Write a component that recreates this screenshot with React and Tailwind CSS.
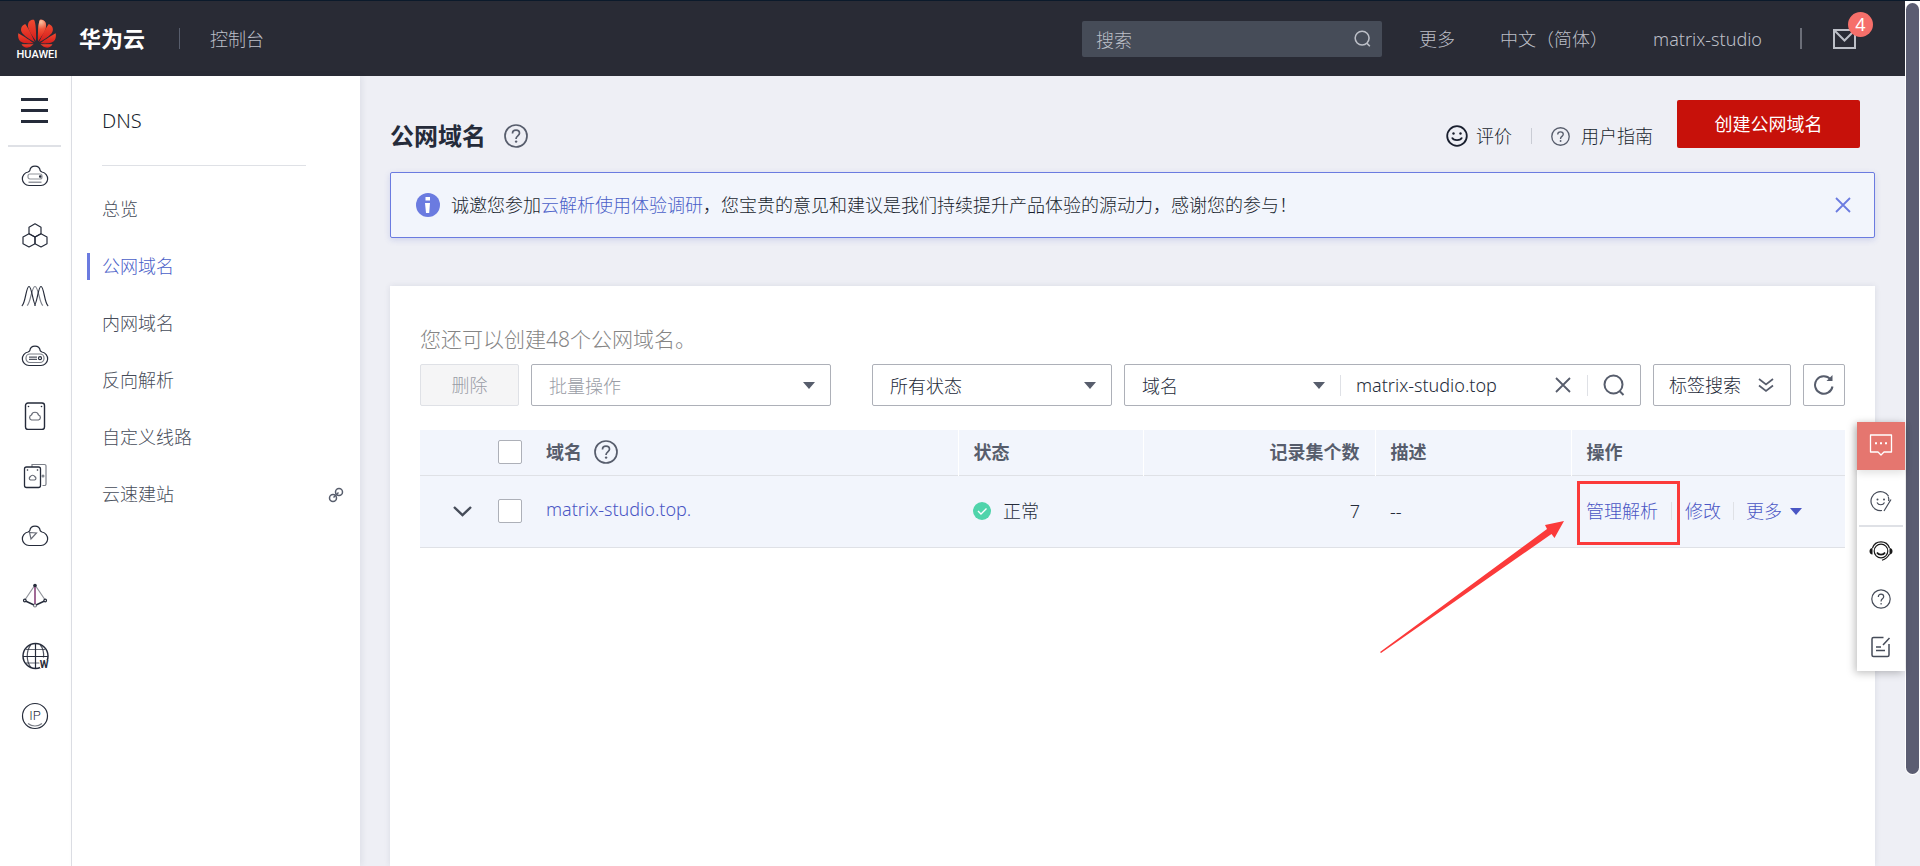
import { useState } from 'react';

const MENU = ['总览', '公网域名', '内网域名', '反向解析', '自定义线路', '云速建站'];

const CLOUD = 'M8 23.5 A6.8 6.8 0 0 1 7 10 C8 9.8 8.3 9.4 8.8 8.6 A5.25 5.25 0 0 1 19.2 8.6 C19.7 9.4 20 9.8 21 10 A6.8 6.8 0 0 1 20 23.5 Z';
const SMALL_CLOUD = 'M10.5 18 a2.6 2.6 0 0 1 0-5 a3.6 3.6 0 0 1 7 0 a2.6 2.6 0 0 1 0 5 Z';

const RAIL = [
  { label: '弹性云服务器', art: (
    <>
      <path d={CLOUD} />
      <rect x="7" y="12" width="14" height="5" rx="2" strokeOpacity=".5" />
      <path d="M7.5 20.2h13" strokeOpacity=".6" />
      <circle cx="19.2" cy="14.5" r=".7" fill="currentColor" />
    </>
  ) },
  { label: '云容器', art: (
    <>
      <path d="M14 1.8l6 3.4v6.6l-6 3.2-6-3.2V5.2z" strokeLinejoin="round" />
      <path d="M8 11.8l6 3.2v6.8l-6 3.2-6-3.2V15z" strokeLinejoin="round" />
      <path d="M20 11.8l6 3.2v6.8l-6 3.2-6-3.2V15z" strokeLinejoin="round" />
    </>
  ) },
  { label: '弹性伸缩', art: (
    <>
      <path d="M.8 24C4.500 22 5 4.500 8 4.500S12 23.500 15 23.500" />
      <path d="M27.200 24C23.500 22 23 4.500 20 4.500S16 23.500 13 23.500" />
      <path d="M6 23.500C9.500 22 10.500 4.500 14 4.500S18.500 22 22 23.500" strokeOpacity=".6" />
    </>
  ) },
  { label: '云硬盘', art: (
    <>
      <path d={CLOUD} />
      <rect x="5" y="12" width="18" height="8.500" rx="4" strokeOpacity=".6" />
      <path d="M8 15.200h8M8 17.300h8" strokeOpacity=".8" />
      <circle cx="19" cy="16.200" r="1.500" />
    </>
  ) },
  { label: '专属存储', art: (
    <>
      <rect x="4.500" y="1" width="19" height="26.500" rx="2.500" strokeWidth="1.400" />
      <path d={SMALL_CLOUD} strokeOpacity=".7" />
      <circle cx="7.500" cy="4.500" r=".8" fill="currentColor" stroke="none" />
      <circle cx="20.500" cy="4.500" r=".8" fill="currentColor" stroke="none" />
    </>
  ) },
  { label: '云备份', art: (
    <>
      <rect x="3.500" y="5" width="16" height="20.500" rx="2" strokeWidth="1.300" />
      <path d="M11 5V2.500h12.500a1.500 1.500 0 0 1 1.500 1.500v18a1.500 1.500 0 0 1-1.500 1.500h-2" strokeOpacity=".6" />
      <path d="M9.500 18a1.800 1.800 0 0 1 0-3.400 a2.300 2.300 0 0 1 4.200 0 a1.800 1.800 0 0 1 0 3.400Z" strokeOpacity=".7" />
      <circle cx="6.500" cy="8" r=".8" fill="currentColor" stroke="none" />
      <circle cx="16.500" cy="8" r=".8" fill="currentColor" stroke="none" />
      <circle cx="22" cy="14" r=".9" strokeOpacity=".6" />
    </>
  ) },
  { label: '虚拟私有云', art: (
    <>
      <path d={CLOUD} />
      <path d="M8.500 10.500l7 .5-5.500 6z" strokeOpacity=".7" />
    </>
  ) },
  { label: '弹性负载均衡', art: (
    <>
      <path d="M14 3L3.500 18.500M14 3l10.500 15.500" strokeOpacity=".5" />
      <path d="M14 3v19" stroke="#7a2a6a" strokeWidth="1.400" />
      <path d="M4.500 19l8.500 4M23.500 19l-8.500 4" strokeWidth="1.400" />
      <circle cx="14" cy="3.500" r="1.800" fill="currentColor" stroke="none" />
      <circle cx="3.800" cy="18.500" r="1.300" fill="white" />
      <circle cx="24.200" cy="18.500" r="1.300" fill="white" />
      <circle cx="14" cy="23.500" r="1.500" fill="white" strokeOpacity=".6" />
    </>
  ) },
  { label: '域名注册', art: (
    <>
      <circle cx="14.500" cy="14" r="12.500" strokeWidth="1.500" />
      <path d="M2 14.500h25M14.500 1.500v25" />
      <path d="M5 7.500h19M5 21h14" strokeOpacity=".7" />
      <path d="M10 2.500c-5 6-5 17 0 23M19 2.500c3 3.500 4 8 3.500 13" strokeOpacity=".8" />
      <path d="M18 18h10v8H19z" fill="white" stroke="none" />
      <text x="23" y="26" textAnchor="middle" fill="currentColor" stroke="none" className="font-[Roboto] text-[10px] font-bold">W</text>
    </>
  ) },
  { label: '弹性公网IP', art: (
    <>
      <circle cx="14" cy="14" r="12.500" strokeWidth="1.200" />
      <path d="M7 21.500c4 3.300 10 3.300 14 0" strokeOpacity=".6" />
      <text x="14" y="18" textAnchor="middle" fill="currentColor" stroke="none" className="font-[Roboto] text-[13px] font-light">IP</text>
    </>
  ) },
];

function HuaweiLogo() {
  const half = (
    <>
      <path d="M18 22C18.200 15 18 4 16 .8C12.500.2 9.500 3 10 7.500C10.500 12 15 18 18 22Z" />
      <path d="M16.800 23C14 17 10.500 9 7.200 5C3.500 6.500 1.500 10.500 4.500 14.500C8 18.500 13 21 16.800 23Z" />
      <path d="M15.800 24.300C10 20 3.500 16 .3 14.300C-.4 19 .8 22 4.500 23.500C8 24.800 12.500 24.300 15.800 24.300Z" />
      <path d="M15.500 25.300C11 25.300 6.500 25 3.500 25.200C5 28 8 29.300 11 28.300C13 27.600 14.500 26.300 15.500 25.300Z" />
    </>
  );
  return (
    <svg width="38" height="30" viewBox="0 0 38 30" aria-hidden="true">
      <defs>
        <radialGradient id="petal" gradientUnits="userSpaceOnUse" cx="23" cy="3" r="24">
          <stop offset="0" stopColor="#fbc3a0" />
          <stop offset=".3" stopColor="#f0543a" />
          <stop offset=".65" stopColor="#e5281b" />
          <stop offset="1" stopColor="#c8171a" />
        </radialGradient>
        <linearGradient id="petalDark" x1="0" y1="0" x2="0" y2="1">
          <stop offset="0" stopColor="#f04a30" />
          <stop offset="1" stopColor="#d51c1c" />
        </linearGradient>
      </defs>
      <g fill="url(#petalDark)">{half}</g>
      <g fill="url(#petalDark)" transform="translate(38 0) scale(-1 1)">{half}</g>
      <path d="M20 22C19.800 15 20 4 22 .8C25.500.2 28.500 3 28 7.500C27.500 12 23 18 20 22Z" fill="url(#petal)" />
    </svg>
  );
}

function HelpIcon({ className }) {
  return (
    <svg viewBox="0 0 24 24" className={className} fill="none" stroke="currentColor" strokeWidth="1.700" aria-hidden="true">
      <circle cx="12" cy="12" r="11" />
      <path d="M8.500 9.500C8.500 7.500 10 6.200 12 6.200s3.500 1.300 3.500 3.100c0 2.400-3.400 2.700-3.400 5.200v.5" />
      <circle cx="12.100" cy="17.600" r="1.200" fill="currentColor" stroke="none" />
    </svg>
  );
}

function SearchIcon({ className }) {
  return (
    <svg viewBox="0 0 22 22" className={className} fill="none" stroke="currentColor" strokeWidth="2" aria-hidden="true">
      <circle cx="10.500" cy="10.500" r="9" />
      <path d="M16.500 17l4 4" />
    </svg>
  );
}

function CloseIcon({ className }) {
  return (
    <svg viewBox="0 0 16 16" className={className} fill="none" stroke="currentColor" strokeWidth="1.800" aria-hidden="true">
      <path d="M1 1l14 14M15 1L1 15" />
    </svg>
  );
}

function Caret({ className }) {
  return (
    <svg width="12" height="7" viewBox="0 0 12 7" className={className} aria-hidden="true">
      <path d="M0 0h12L6 7z" fill="currentColor" />
    </svg>
  );
}

function SelectBox({ label, value, boxCls, textCls = 'text-[#252b3a]' }) {
  return (
    <label className={`relative flex h-[42px] items-center ${boxCls}`}>
      <span className="sr-only">{label}</span>
      <select className={`h-full w-full appearance-none bg-transparent pl-[17px] pr-10 font-['Noto_Sans_CJK_SC',sans-serif] leading-8 ${textCls}`}>
        <option>{value}</option>
      </select>
      <Caret className="pointer-events-none absolute right-[15px] text-[#575d6c]" />
    </label>
  );
}

function TopBar() {
  return (
    <header className="flex h-[76px] items-center border-t border-[#0b1a2b] bg-[#292b35] text-[#bcbfc7]">
      <a href="#" className="mt-[2px] ml-[18px] flex w-[38px] flex-col items-center" aria-label="HUAWEI">
        <HuaweiLogo />
        <span className="font-[Roboto] text-[11px] leading-3 font-medium text-white">HUAWEI</span>
      </a>
      <a href="#" className="ml-[23px] text-[22px] font-bold text-white">华为云</a>
      <span className="ml-[34px] h-[21px] w-px bg-[#575d6c]" />
      <a href="#" className="ml-[30px]">控制台</a>

      <label className="mr-px ml-auto flex h-9 w-[300px] items-center rounded-xs bg-[#464c58] pr-[11px] pl-[14px]">
        <span className="sr-only">搜索</span>
        <input type="text" placeholder="搜索" className="h-full min-w-0 flex-1 bg-transparent font-['Noto_Sans_CJK_SC',sans-serif] leading-8 outline-none placeholder:text-[#bcbfc7]" />
        <SearchIcon className="h-[17px] w-[17px]" />
      </label>
      <a href="#" className="ml-9">更多</a>
      <a href="#" className="ml-[45px]">中文（简体）</a>
      <a href="#" className="ml-[45px]">matrix-studio</a>
      <span className="ml-[38px] h-[21px] w-[2px] bg-[#6b6e78]" />
      <button className="relative mr-[49px] ml-[31px]" aria-label="消息">
        <svg width="23" height="20" viewBox="0 0 23 20" fill="none" stroke="currentColor" strokeWidth="2">
          <path d="M1 1h21v18H1zM1.500 1.500l10 10 10-10" />
        </svg>
        <span className="absolute -top-[17px] left-[15px] flex h-[25px] w-[25px] items-center justify-center rounded-full bg-[#f66f6a] font-normal text-white">4</span>
      </button>
    </header>
  );
}

function Rail() {
  return (
    <nav className="flex w-18 shrink-0 flex-col items-center border-r border-[#dfe1e6] bg-white pr-[2px]">
      <button className="mt-[22px] flex h-[25px] w-[27px] flex-col justify-between text-[#252b3a]" aria-label="菜单">
        <span className="h-[3px] w-full bg-current" />
        <span className="h-[3px] w-full bg-current" />
        <span className="h-[3px] w-full bg-current" />
      </button>
      <span className="mt-[22px] h-[2px] w-[53px] bg-[#dfe1e6]" />
      <ul className="mt-[15px] flex flex-col gap-8">
        {RAIL.map(item => (
          <li key={item.label}>
            <a href="#" aria-label={item.label} className="block text-[#252b3a]">
              <svg width="28" height="28" viewBox="0 0 28 28" fill="none" stroke="currentColor" strokeWidth="1.200">
                {item.art}
              </svg>
            </a>
          </li>
        ))}
      </ul>
    </nav>
  );
}

function SideMenu() {
  return (
    <nav className="w-72 shrink-0 bg-white pt-[30px] shadow-[2px_0_6px_rgba(40,50,80,0.08)]">
      <h2 className="ml-[30px] text-xl leading-[30px] text-[#191f2e]">DNS</h2>
      <div className="mt-[29px] mr-[54px] ml-[30px] h-px bg-[#dfe1e6]" />
      <ul className="mt-[30px] flex flex-col gap-[30px]">
        {MENU.map(name => {
          const active = name === '公网域名';
          return (
            <li key={name} className={`ml-[15px] border-l-3 pl-3 leading-[27px] ${active ? 'border-[#6b7be0] text-[#4a60c8]' : 'border-transparent text-[#464c59]'}`}>
              <a href="#" className="flex items-center justify-between pr-4">
                {name}
                {name === '云速建站' && (
                  <svg width="16" height="16" viewBox="0 0 16 16" fill="none" stroke="#575d6c" strokeWidth="1.500" aria-hidden="true">
                    <circle cx="11" cy="5" r="3.500" />
                    <circle cx="5" cy="11" r="3.500" />
                    <path d="M5.500 10.500l5-5" />
                  </svg>
                )}
              </a>
            </li>
          );
        })}
      </ul>
    </nav>
  );
}

function PageHeader() {
  return (
    <div className="flex h-[72px] items-center pr-[15px]">
      <h1 className="text-2xl font-bold text-[#252b3a]">公网域名</h1>
      <button className="ml-[18px] text-[#575d6c]" aria-label="帮助"><HelpIcon className="h-6 w-6" /></button>
      <div className="ml-auto flex items-center text-[#191f2e]">
        <a href="#" className="flex items-center gap-2">
          <svg width="22" height="22" viewBox="0 0 22 22" fill="none" stroke="currentColor" strokeWidth="1.800" aria-hidden="true">
            <circle cx="11" cy="11" r="9.800" />
            <path d="M6 12.500c1.500 3.500 8.500 3.500 10 0" />
            <circle cx="7.500" cy="8.500" r="1.200" fill="currentColor" stroke="none" />
            <circle cx="14.500" cy="8.500" r="1.200" fill="currentColor" stroke="none" />
          </svg>
          评价
        </a>
        <span className="mx-[19px] h-4 w-px bg-[#c9ccd4]" />
        <a href="#" className="flex items-center gap-[11px]">
          <HelpIcon className="h-[19px] w-[19px] text-[#575d6c]" />
          用户指南
        </a>
      </div>
      <button className="mb-6 ml-6 h-12 w-[183px] rounded-xs bg-[#c7110a] font-normal text-white">创建公网域名</button>
    </div>
  );
}

function Notice({ onClose }) {
  return (
    <div className="flex h-[66px] items-center rounded-xs border border-[#6b7be0] bg-[#f2f5fc] px-[25px] shadow-[0_2px_6px_rgba(80,100,200,0.2)]">
      <svg width="24" height="24" viewBox="0 0 24 24" aria-hidden="true">
        <circle cx="12" cy="12" r="12" fill="#6b7be0" />
        <path d="M9.500 4h4.500v3.500H9.500zM9 10h5l-.8 10h-3.200z" fill="white" />
      </svg>
      <p className="ml-[11px] text-[#191f2e]">
        诚邀您参加<a href="#" className="text-[#4a60c8]">云解析使用体验调研</a>，您宝贵的意见和建议是我们持续提升产品体验的源动力，感谢您的参与！
      </p>
      <button onClick={onClose} className="mr-[-2px] ml-auto text-[#6b7be0]" aria-label="关闭"><CloseIcon className="h-4 w-4" /></button>
    </div>
  );
}

function FilterBar() {
  const [keyword, setKeyword] = useState('matrix-studio.top');

  return (
    <div className="flex gap-3 text-[#252b3a]">
      <button disabled className="w-[99px] rounded-xs border border-[#dfe1e6] bg-[#f5f5f6] text-[#9a9da6]">删除</button>
      <SelectBox label="批量操作" value="批量操作" boxCls="w-[300px] rounded-xs border border-[#adb0b8]" textCls="text-[#9a9da6]" />
      <div className="ml-auto flex gap-3">
        <SelectBox label="状态" value="所有状态" boxCls="w-[240px] rounded-xs border border-[#adb0b8]" />
        <div className="flex h-[42px] w-[517px] items-center rounded-xs border border-[#adb0b8]">
          <SelectBox label="搜索字段" value="域名" boxCls="w-[215px]" />
          <span className="h-[21px] w-px bg-[#dfe1e6]" />
          <input
            type="text"
            aria-label="域名"
            value={keyword}
            onChange={e => setKeyword(e.target.value)}
            className="h-full min-w-0 flex-1 bg-transparent pl-[15px] outline-none"
          />
          <button onClick={() => setKeyword('')} className="mr-4 text-[#575d6c]" aria-label="清除"><CloseIcon className="h-4 w-4" /></button>
          <span className="h-[21px] w-px bg-[#dfe1e6]" />
          <button className="mx-[15px] text-[#575d6c]" aria-label="搜索"><SearchIcon className="h-[22px] w-[22px]" /></button>
        </div>
        <button className="flex w-[138px] items-center gap-[17px] rounded-xs border border-[#adb0b8] pl-[15px]">
          标签搜索
          <svg width="16" height="15" viewBox="0 0 16 15" fill="none" stroke="#575d6c" strokeWidth="1.700" aria-hidden="true">
            <path d="M1 1l7 5.500L15 1M1 7.500L8 13l7-5.500" />
          </svg>
        </button>
        <button className="flex w-[42px] items-center justify-center rounded-xs border border-[#adb0b8] text-[#575d6c]" aria-label="刷新">
          <svg width="20" height="20" viewBox="0 0 20 20" fill="none" stroke="currentColor" strokeWidth="2">
            <path d="M18.500 11.500A8.800 8.800 0 1 1 16.500 4.200" />
            <path d="M18.500 0v6h-6z" fill="currentColor" stroke="none" />
          </svg>
        </button>
      </div>
    </div>
  );
}

function CheckBox({ label }) {
  return <input type="checkbox" aria-label={label} className="block h-6 w-6 appearance-none rounded-xs border border-[#adb0b8] bg-white" />;
}

function DomainTable() {
  return (
    <table className="mt-6 w-full table-fixed border-collapse bg-[#f2f5fc] text-left text-[#252b3a]">
      <colgroup>
        <col className="w-[63px]" />
        <col className="w-12" />
        <col />
        <col className="w-[185px]" />
        <col className="w-[232px]" />
        <col className="w-[196px]" />
        <col className="w-[274px]" />
      </colgroup>
      <thead>
        <tr className="h-[45px] border-b border-[#dfe1e6] text-[#575d6c]">
          <th />
          <th className="pl-[15px]"><CheckBox label="全选" /></th>
          <th className="pl-[15px]">
            <span className="flex items-center gap-3">域名 <HelpIcon className="h-6 w-6" /></span>
          </th>
          <th className="border-l border-white pl-[15px]">状态</th>
          <th className="border-l border-white pr-[15px] text-right">记录集个数</th>
          <th className="border-l border-white pl-[15px]">描述</th>
          <th className="border-l border-white pl-[15px]">操作</th>
        </tr>
      </thead>
      <tbody>
        <tr className="h-[72px] border-b border-[#dfe1e6]">
          <td className="pl-[33px]">
            <button className="block" aria-label="展开">
              <svg width="19" height="11" viewBox="0 0 19 11" fill="none" stroke="#464c59" strokeWidth="2.400" aria-hidden="true">
                <path d="M1 1l8.500 8L18 1" />
              </svg>
            </button>
          </td>
          <td className="pl-[15px]"><CheckBox label="matrix-studio.top." /></td>
          <td className="pb-1 pl-[15px]"><a href="#" className="text-[#4a56c4]">matrix-studio.top.</a></td>
          <td className="pl-[15px]">
            <span className="flex items-center gap-3">
              <svg width="18" height="18" viewBox="0 0 18 18" fill="none" aria-hidden="true">
                <circle cx="9" cy="9" r="9" fill="#50d4ab" />
                <path d="M5 9l3 3 5.500-5.500" stroke="white" strokeWidth="1.400" />
              </svg>
              正常
            </span>
          </td>
          <td className="pr-[15px] text-right">7</td>
          <td className="pl-[15px]">--</td>
          <td className="relative pl-[15px]">
            <div className="flex items-center text-[#4a56c4]">
              <a href="#">管理解析</a>
              <span className="mx-[13px] h-[18px] w-px bg-[#dfe1e6]" />
              <a href="#">修改</a>
              <span className="mx-3 h-[18px] w-px bg-[#dfe1e6]" />
              <button className="flex items-center gap-2">更多 <Caret /></button>
            </div>
            {/* callout frame and arrow over the row */}
            <div className="pointer-events-none absolute top-[5px] left-[6px] h-16 w-[103px] border-3 border-[#fb3a3a]" />
            <svg className="pointer-events-none absolute top-[45px] -left-[191px]" width="185" height="134" viewBox="0 0 185 134" aria-hidden="true">
              <path d="M184 0L174.500 17L171.500 13L1 132L0 131L167 8L165 4Z" fill="#fb3a3a" />
            </svg>
          </td>
        </tr>
      </tbody>
    </table>
  );
}

function FloatingTools() {
  return (
    <aside className="absolute top-[422px] right-0 w-12 bg-white text-[#464c59] shadow-[-2px_2px_8px_rgba(0,0,0,0.25)]">
      <button className="flex h-12 w-full items-center justify-center bg-[#e5766f] pb-[2px] text-white shadow-[0_3px_8px_rgba(0,0,0,0.12)]" aria-label="建议反馈">
        <svg width="24" height="22" viewBox="0 0 24 22" fill="none" stroke="currentColor" strokeWidth="1.300">
          <path d="M1.500 1h21v17h-7.500l-3 3-3-3H1.500z" strokeLinejoin="round" />
          <path d="M6 9.200h2M11 9.200h2M16 9.200h2" strokeWidth="2" />
        </svg>
      </button>
      <button className="mt-[7px] flex h-12 w-full items-center justify-center" aria-label="满意度">
        <svg width="22" height="22" viewBox="0 0 22 22" fill="none" stroke="currentColor" strokeWidth="1.200">
          <path d="M18.500 6A9.500 9.500 0 1 0 12 20.500" />
          <path d="M21 9.500l-5.500 9-1.500 2.500M18 6.500c1 1.500 1 3 .5 4.500" />
          <path d="M7 12.500c1.500 3 6 3 7.500 0" />
          <circle cx="7.500" cy="9.500" r="1" fill="currentColor" stroke="none" />
          <circle cx="14" cy="9.500" r="1" fill="currentColor" stroke="none" />
        </svg>
      </button>
      <div className="mx-[2px] h-[2px] bg-[#dfe1e6]" />
      <button className="flex h-12 w-full items-center justify-center text-[#191919]" aria-label="在线客服">
        <svg width="24" height="22" viewBox="0 0 24 22" fill="none" stroke="currentColor" strokeWidth="1.200">
          <path d="M3.500 8a9 9 0 0 1 17 0M20.500 14c-1.500 3-3.500 5-7.500 6.200" />
          <circle cx="12" cy="11" r="6.800" />
          <path d="M8 12.500c1.500 2.800 6.500 2.800 8 0" strokeWidth="1.600" />
          <path d="M3.500 8v6.500C1.500 14.500.5 13 .5 11.200S1.500 8 3.500 8zM20.500 8v6.500c2 0 3-1.500 3-3.300S22.500 8 20.500 8z" fill="currentColor" stroke="none" />
        </svg>
      </button>
      <button className="flex h-12 w-full items-center justify-center" aria-label="帮助中心">
        <svg width="20" height="20" viewBox="0 0 20 20" fill="none" stroke="currentColor" strokeWidth="1.200">
          <circle cx="10" cy="10" r="9.200" />
          <path d="M7.300 8c0-1.700 1.100-2.800 2.700-2.800s2.700 1 2.700 2.500c0 2-2.600 2.200-2.600 4.300v.5M10.100 14v1.400" />
        </svg>
      </button>
      <button className="flex h-12 w-full items-center justify-center" aria-label="意见">
        <svg width="20" height="22" viewBox="0 0 20 22" fill="none" stroke="currentColor" strokeWidth="1.500">
          <path d="M12.500 1.500H2.500a1.500 1.500 0 0 0-1.500 1.500v16a1.500 1.500 0 0 0 1.500 1.500h14a1.500 1.500 0 0 0 1.500-1.500V8" />
          <path d="M18.500 2l-6.500 7M5 11h5M5 14.500h9" />
        </svg>
      </button>
    </aside>
  );
}

export default function App() {
  const [showNotice, setShowNotice] = useState(true);

  return (
    <div className="flex min-h-screen bg-[#eeeff5] font-['Noto_Sans','Noto_Sans_CJK_SC',sans-serif] text-lg font-light">
      <div className="relative flex min-w-0 flex-1 flex-col">
        <TopBar />
        <div className="flex flex-1">
          <Rail />
          <SideMenu />
          <main className="flex min-w-0 flex-1 flex-col pt-6 pr-[30px] pl-[30px]">
            <PageHeader />
            {showNotice && <Notice onClose={() => setShowNotice(false)} />}
            <section className="mt-12 flex-1 bg-white px-[30px] pt-[38px] shadow-[0_0_6px_rgba(40,50,80,0.1)]">
              <p className="mb-[9px] text-[21px] leading-[31px] text-[#858585]">您还可以创建48个公网域名。</p>
              <FilterBar />
              <DomainTable />
            </section>
          </main>
        </div>
        <FloatingTools />
      </div>
      {/* page scroll track */}
      <div className="w-[15px] shrink-0 border-t border-[#0b1a2b]">
        <div className="h-[774px] rounded-b-full border border-t-2 border-white bg-white">
          <div className="h-full rounded-full bg-[#5b5d72]" />
        </div>
      </div>
    </div>
  );
}
